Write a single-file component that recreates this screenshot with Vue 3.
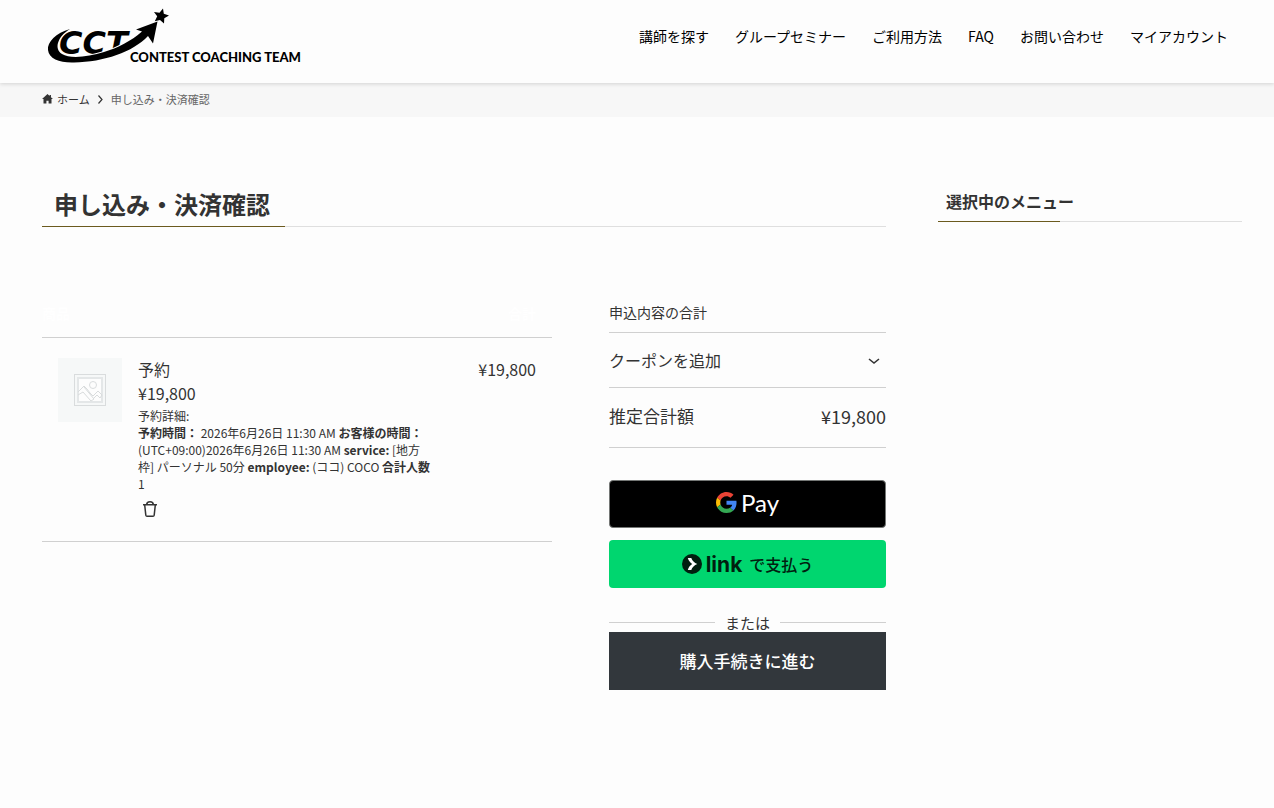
<script setup>
import { ref } from 'vue'

const navItems = [
  '講師を探す',
  'グループセミナー',
  'ご利用方法',
  'FAQ',
  'お問い合わせ',
  'マイアカウント'
]

const cartItems = ref([
  {
    id: 1,
    name: '予約',
    price: 19800,
    details: [
      { label: '予約時間：', value: '2026年6月26日 11:30 AM' },
      { label: 'お客様の時間：', value: '(UTC+09:00)2026年6月26日 11:30 AM' },
      { label: 'service:', value: '[地方枠] パーソナル 50分' },
      { label: 'employee:', value: '(ココ) COCO' },
      { label: '合計人数', value: '1' }
    ]
  }
])

const total = ref(19800)
const couponOpen = ref(false)

function yen(value) {
  return '¥' + value.toLocaleString('en-US')
}
</script>

<template>
  <header class="header">
    <a href="#" class="logo" aria-label="CONTEST COACHING TEAM">
      <svg width="264" height="60" viewBox="42 6 264 60">
        <text class="logo-mark" x="59" y="54">CCT</text>
        <path
          class="swoosh"
          d="M70 29 C56 33 47 42 48 50 C49 59 60 63 74 62.500 C104 62 133 52 148 36 L153 43.500 L157.500 21.500 L136 29.500 L142 31.500 C131 41 118 48 104 52 C88 57 70 59 62 54 C54 49 57 37 70 29 Z"
        />
        <path d="M163 8.500 L163.800 13.800 L169 15.500 L164.300 18.200 L164 23.500 L160 19.900 L154.800 21.300 L157.200 16.300 L154 12 L159.500 12.800 Z" />
        <text class="logo-name" x="130" y="62">CONTEST COACHING TEAM</text>
      </svg>
    </a>
    <nav class="nav">
      <a v-for="item in navItems" :key="item" href="#">{{ item }}</a>
    </nav>
  </header>

  <nav class="breadcrumb" aria-label="パンくず">
    <a href="#">
      <svg width="11" height="10" viewBox="0 0 12 11">
        <path d="M6 0 L0 5.600 H1.600 V10.500 H4.800 V7.300 H7.200 V10.500 H10.400 V5.600 H12 L9.800 3.500 V1 H8.300 V2.100 Z" fill="currentColor" />
      </svg>
      ホーム
    </a>
    <svg width="5" height="9" viewBox="0 0 5 9">
      <path d="M0.500 0.500 L4 4.500 L0.500 8.500" fill="none" stroke="#333" stroke-width="1.200" />
    </svg>
    <span>申し込み・決済確認</span>
  </nav>

  <div class="container">
    <main class="main">
      <h1 class="page-title"><span>申し込み・決済確認</span></h1>

      <div class="cart">
        <table class="cart-items">
          <colgroup>
            <col class="col-image" />
            <col />
            <col class="col-total" />
          </colgroup>
          <thead>
            <tr>
              <th colspan="2">商品</th>
              <th class="right">合計</th>
            </tr>
          </thead>
          <tbody>
            <tr v-for="item in cartItems" :key="item.id">
              <td class="cell-image">
                <div class="thumb">
                  <svg width="32" height="32" viewBox="0 0 32 32" fill="none" stroke="#d9dcdd">
                    <rect x="0.500" y="0.500" width="31" height="31" />
                    <rect x="4" y="4" width="24" height="24" fill="#fdfdfd" stroke="#e4e7e8" stroke-width="2" />
                    <circle cx="19" cy="11" r="3.500" />
                    <path d="M4 18 L10 12 L13 15 L16 19 M4 21 L9 18 L17 27 L20 25 L10 13 M16 19 L19 22 L24 17 L28 21 L26 24 L23 21 L19 25" />
                  </svg>
                </div>
              </td>
              <td class="cell-product">
                <a href="#" class="name">{{ item.name }}</a>
                <div class="price">{{ yen(item.price) }}</div>
                <div class="details">
                  <div>予約詳細:</div>
                  <template v-for="d in item.details" :key="d.label">
                    <strong>{{ d.label }}</strong> {{ d.value + ' ' }}
                  </template>
                </div>
                <button type="button" class="remove" aria-label="削除">
                  <svg width="24" height="24" viewBox="0 0 24 24" fill="none" stroke="currentColor" stroke-width="1.500">
                    <path d="M5 7.700 H19 M8.700 7.700 C8.700 3.900 15.300 3.900 15.300 7.700 M6.700 8 L7.800 18.200 Q8 19.300 9 19.300 H15 Q16 19.300 16.200 18.200 L17.300 8" />
                  </svg>
                </button>
              </td>
              <td class="cell-total right">{{ yen(item.price) }}</td>
            </tr>
          </tbody>
        </table>

        <section class="totals">
          <h2 class="totals-title">申込内容の合計</h2>
          <button
            type="button"
            class="coupon"
            :aria-expanded="couponOpen"
            @click="couponOpen = !couponOpen"
          >
            クーポンを追加
            <svg width="24" height="24" viewBox="0 0 24 24" fill="none" stroke="currentColor" stroke-width="1.600">
              <path d="M7 11 L12 15 L17 11" />
            </svg>
          </button>
          <div class="estimate">
            <span>推定合計額</span>
            <span class="amount">{{ yen(total) }}</span>
          </div>

          <div class="express">
            <button type="button" class="gpay" aria-label="Google Pay">
              <svg width="21" height="21" viewBox="0 0 48 48">
                <path fill="#EA4335" d="M24 9.500c3.540 0 6.710 1.220 9.210 3.600l6.850-6.850C35.900 2.380 30.470 0 24 0 14.620 0 6.510 5.380 2.560 13.220l7.980 6.190C12.430 13.720 17.740 9.500 24 9.500z" />
                <path fill="#4285F4" d="M46.980 24.550c0-1.570-.15-3.090-.38-4.550H24v9.020h12.940c-.58 2.960-2.260 5.480-4.780 7.180l7.730 6c4.510-4.180 7.090-10.360 7.090-17.650z" />
                <path fill="#FBBC05" d="M10.530 28.590c-.48-1.450-.76-2.990-.76-4.590s.27-3.140.76-4.590l-7.980-6.190C.92 16.460 0 20.120 0 24c0 3.880.92 7.540 2.560 10.780l7.970-6.190z" />
                <path fill="#34A853" d="M24 48c6.480 0 11.930-2.130 15.890-5.810l-7.730-6c-2.150 1.450-4.920 2.300-8.160 2.300-6.260 0-11.570-4.220-13.470-9.910l-7.980 6.190C6.510 42.620 14.620 48 24 48z" />
              </svg>
              <span>Pay</span>
            </button>
            <button type="button" class="link-pay">
              <svg width="20" height="20" viewBox="0 0 20 20">
                <circle cx="10" cy="10" r="10" fill="#011e0f" />
                <path d="M5.800 4 H9.300 C10.200 6.600 12.300 8.900 15.300 10 C12.300 11.100 10.200 13.400 9.300 16 H5.800 C6.400 13.600 8 11.400 10.200 10 C8 8.600 6.400 6.400 5.800 4 Z" fill="#fff" />
              </svg>
              <b>link</b>
              <span>で支払う</span>
            </button>
          </div>

          <div class="or">または</div>
          <button type="button" class="checkout">購入手続きに進む</button>
        </section>
      </div>
    </main>

    <aside class="sidebar">
      <h2 class="side-title">選択中のメニュー</h2>
    </aside>
  </div>
</template>

<style>
body {
  margin: 0;
  background: #fdfdfd;
  color: #333;
  font-family: "Noto Sans CJK JP", sans-serif;
}
</style>

<style scoped>
a {
  color: inherit;
  text-decoration: none;
}

button {
  font-family: inherit;
  color: inherit;
  border: 0;
  padding: 0;
  background: none;
  cursor: pointer;
}

svg {
  display: block;
  flex: none;
}

h1, h2 {
  margin: 0;
}

.header {
  position: relative;
  display: flex;
  justify-content: space-between;
  align-items: flex-start;
  height: 83px;
  padding: 0 46px 0 42px;
  box-sizing: border-box;
  background: #fdfdfd;
  box-shadow: 0 1px 4px rgba(0, 0, 0, 0.15);
}

.logo {
  padding-top: 6px;
}

.logo-mark {
  font: italic bold 32px "DejaVu Sans", sans-serif;
}

.logo-name {
  font: 900 13px Lato, sans-serif;
}

.swoosh {
  stroke: #fdfdfd;
  stroke-width: 2px;
  paint-order: stroke;
}

.nav {
  display: flex;
  gap: 26px;
  padding-top: 24px;
  font-size: 14px;
  line-height: 24px;
  color: #000;
}

/* breadcrumb */
.breadcrumb {
  display: flex;
  align-items: center;
  gap: 8px;
  height: 34px;
  padding: 0 42px 2px;
  box-sizing: border-box;
  background: #f7f7f7;
  font-size: 11px;
}

.breadcrumb a {
  display: flex;
  align-items: center;
  gap: 4px;
}

.breadcrumb span {
  color: #666;
}

.container {
  display: flex;
  gap: 52px;
  padding: 64px 32px 64px 42px;
}

.main {
  flex: 1;
  min-width: 0;
}

.sidebar {
  width: 304px;
}

.page-title {
  border-bottom: 1px solid #dfdfdf;
  font-size: 24px;
  line-height: 45px;
}

.page-title span {
  display: inline-block;
  margin-bottom: -1px;
  padding: 0 15px 0 12px;
  border-bottom: 1px solid #6b5a1e;
  vertical-align: top;
}

.side-title {
  padding: 0 8px 1px;
  font-size: 16px;
  line-height: 40px;
  background: linear-gradient(90deg, #6b5a1e 40%, #dfdfdf 40%) bottom / 100% 1px no-repeat;
}

.cart {
  display: grid;
  grid-template-columns: 510fr 277fr;
  gap: 57px;
  align-items: start;
  margin-top: 67px;
}

/* items */
.cart-items {
  width: 100%;
  table-layout: fixed;
  border-collapse: collapse;
}

.col-image {
  width: 96px;
}

.col-total {
  width: 104px;
}

.cart-items th {
  height: 38px;
  padding: 0 0 5px;
  border-bottom: 1px solid #d0d0d0;
  color: #fff;
  font-size: 14px;
  line-height: 20px;
  text-align: left;
}

.cart-items td {
  padding: 20px 0;
  border-bottom: 1px solid #d0d0d0;
  vertical-align: top;
}

.cart-items .right {
  padding-right: 16px;
  text-align: right;
}

.cart-items .cell-image {
  padding-left: 16px;
}

.cart-items .cell-product,
.cart-items .cell-total {
  padding-top: 19px;
}

.thumb {
  display: flex;
  align-items: center;
  justify-content: center;
  width: 64px;
  height: 64px;
  background: #f6f8f8;
}

.name,
.price,
.cell-total {
  font-size: 16px;
  line-height: 24px;
}

.name {
  display: block;
}

.details {
  max-width: 294px;
  margin-top: 2px;
  font-size: 12px;
  line-height: 17px;
}

.remove {
  display: block;
  margin-top: 5px;
}

/* totals */
.totals-title {
  padding-bottom: 2px;
  border-bottom: 1px solid #d0d0d0;
  font-size: 14px;
  font-weight: normal;
  line-height: 36px;
}

.coupon {
  display: flex;
  align-items: center;
  justify-content: space-between;
  width: 100%;
  height: 55px;
  padding-bottom: 1px;
  border-bottom: 1px solid #d0d0d0;
  font-size: 16px;
}

.estimate {
  display: flex;
  justify-content: space-between;
  padding-bottom: 3px;
  border-bottom: 1px solid #d0d0d0;
  font-size: 17px;
  line-height: 56px;
}

.amount {
  font-size: 18px;
}

.express {
  display: grid;
  gap: 12px;
  margin-top: 32px;
}

.gpay,
.link-pay {
  display: flex;
  align-items: center;
  justify-content: center;
  gap: 4px;
  height: 48px;
  border-radius: 4px;
}

.gpay {
  padding-bottom: 3px;
  background: #000;
  border: 1px solid #747775;
  color: #fff;
  font-family: Lato, sans-serif;
  font-size: 24px;
}

.link-pay {
  background: #00d66f;
  color: #011e0f;
  font-size: 16px;
  font-weight: 500;
}

.link-pay b {
  margin-right: 3px;
  font-family: Inter, sans-serif;
  font-size: 21px;
}

.or {
  display: flex;
  align-items: center;
  gap: 10px;
  margin-top: 25px;
  font-size: 15px;
  line-height: 19px;
}

.or::before,
.or::after {
  content: "";
  flex: 1;
  border-top: 1px solid #d0d0d0;
}

.checkout {
  width: 100%;
  height: 58px;
  padding-bottom: 2px;
  background: #32373c;
  color: #fff;
  font-size: 17px;
  font-weight: 500;
}
</style>
